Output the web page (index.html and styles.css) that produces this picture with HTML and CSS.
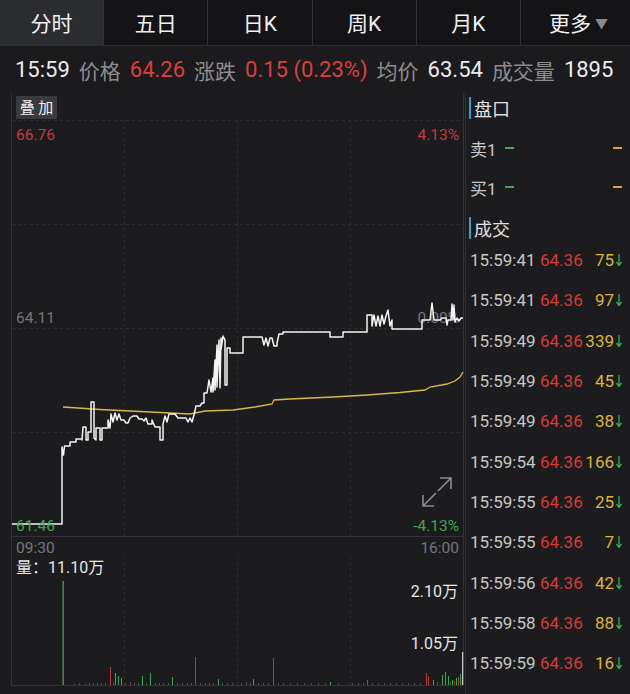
FILE: index.html
```html
<!DOCTYPE html>
<html lang="zh-CN">
<head>
<meta charset="utf-8">
<title>分时</title>
<link rel="stylesheet" href="styles.css">
</head>
<body>
<div class="app">
  <nav class="tabs">
    <div class="tab active">分时</div>
    <div class="tab">五日</div>
    <div class="tab">日K</div>
    <div class="tab">周K</div>
    <div class="tab">月K</div>
    <div class="tab more">更多<span class="caret">▼</span></div>
  </nav>
  <div class="info">
    <span class="w n">15:59</span>
    <span class="g">价格</span>
    <span class="r n">64.26</span>
    <span class="g">涨跌</span>
    <span class="r n">0.15 (0.23%)</span>
    <span class="g">均价</span>
    <span class="w n">63.54</span>
    <span class="g">成交量</span>
    <span class="w n">1895</span>
  </div>
  <div class="main">
    <div class="chart">
      <svg class="chart-svg" width="465" height="601" viewBox="0 93 465 601">
        <!-- frame -->
        <line x1="11.5" y1="93" x2="11.5" y2="686" class="frame"/>
        <line x1="463.5" y1="93" x2="463.5" y2="686" class="frame"/>
        <line x1="11" y1="536.5" x2="464" y2="536.5" class="frame"/>
        <line x1="11" y1="685.5" x2="464" y2="685.5" class="frame"/>
        <!-- grid -->
        <g class="grid">
          <line x1="12" y1="120.5" x2="463" y2="120.5"/>
          <line x1="12" y1="224.5" x2="463" y2="224.5"/>
          <line x1="12" y1="328.5" x2="463" y2="328.5"/>
          <line x1="12" y1="432.5" x2="463" y2="432.5"/>
          <line x1="124.5" y1="120" x2="124.5" y2="536"/>
          <line x1="237.5" y1="120" x2="237.5" y2="536"/>
          <line x1="350.5" y1="120" x2="350.5" y2="536"/>
          <line x1="124.5" y1="556" x2="124.5" y2="685"/>
          <line x1="237.5" y1="556" x2="237.5" y2="685"/>
          <line x1="350.5" y1="556" x2="350.5" y2="685"/>
        </g>
        <!-- overlay button -->
        <rect x="16" y="96" width="41" height="23" class="btn"/>
        <text x="36.5" y="113" class="btn-t" text-anchor="middle">叠 加</text>
        <!-- axis labels -->
        <text x="16" y="140" class="lbl red">66.76</text>
        <text x="459" y="140" class="lbl red" text-anchor="end">4.13%</text>
        <text x="16" y="323" class="lbl gray">64.11</text>
        <text x="459" y="323" class="lbl gray" text-anchor="end">0.00%</text>
        <!-- avg line -->
        <path class="avg" d="M63,407 L100,409.5 L150,412 L190,414 L205,411 L233,410 L255,407 L272,404 L274,400 L290,399 L333,397 L367,395 L400,392.5 L425,390 L430,387 L447,384 L455,381 L460,377 L463,372"/>
        <!-- price line -->
        <path class="price" d="M12,524 H62 V447 L63.5,455 L64.5,446 H70 V442 H76 V439 H82 V440 L83,427 H86 V440 H88 V432 H91 V402 H94 V438 L96,440 V428 H100 V440 H102 V428 H108 V420 L110,428 L111,414 L113,422 L115,413 L117,420 L119,414 L121,420 H124 L126,423 H128 L130,418 L133,416 H137 L139,419 H142 L144,421 L146,418 L148,424 H152 V420 L155,427 H160 V440 H163 V424 L165,416 L167,422 L169,414 H175 L178,418 H186 L188,422 L190,418 L192,422 L194,415 L196,406 H200 L202,403 H204 V393 H207 L209,380 L211,392 L213,378 V392 L215,360 V390 L217,345 V387 L219,340 L220,388 L221,338 V350 L223,336 L225,340 V385 H227 V348 H230 V353 H243 V337 H262 L264,345 L266,338 L268,346 L270,338 H272 L274,346 H277 V343 L279,334 H283 V332 H330 V337 H343 V332 H367 V315 H372 V326 L374,315 L376,326 L378,316 L380,326 L382,315 L384,324 L386,316 L388,310 L390,326 L392,320 V329 H422 V320 H430 L432,303 L434,320 H440 L442,318 H446 L447,325 L448,320 H451 L452,304 L453,320 L454,305 L455,322 L457,318 L459,321 L461,318 H463"/>
        <text x="16" y="531" class="lbl green">61.46</text>
        <text x="459" y="531" class="lbl green" text-anchor="end">-4.13%</text>
        <!-- expand icon -->
        <g class="expand">
          <path d="M436,493 L423,506 M423,495 V506 H434"/>
          <path d="M438,491 L451,478 M440,478 H451 V489"/>
        </g>
        <!-- time axis -->
        <text x="16" y="553" class="lbl gray">09:30</text>
        <text x="459" y="553" class="lbl gray" text-anchor="end">16:00</text>
        <!-- volume labels -->
        <text x="16" y="573" class="vol-t">量：11.10万</text>
        <text x="458" y="597" class="vol-t" text-anchor="end">2.10万</text>
        <text x="458" y="649" class="vol-t" text-anchor="end">1.05万</text>
        <!-- volume bars -->
        <g class="vg">
          <rect x="62.5" y="581" width="1.3" height="104"/>
          <rect x="115" y="673" width="1" height="12"/>
          <rect x="118" y="676" width="1" height="9"/>
          <rect x="121" y="678" width="1" height="7"/>
          <rect x="142" y="676" width="1" height="9"/>
          <rect x="150" y="673" width="1" height="12"/>
          <rect x="172" y="677" width="1" height="8"/>
          <rect x="218" y="679" width="1" height="6"/>
          <rect x="253" y="679" width="1" height="6"/>
          <rect x="330" y="682" width="1" height="3"/>
          <rect x="433" y="680" width="1" height="5"/>
          <rect x="442" y="675" width="1" height="10"/>
          <rect x="445" y="672" width="1" height="13"/>
          <rect x="448" y="676" width="1" height="9"/>
          <rect x="452" y="680" width="1" height="5"/>
          <rect x="456" y="678" width="1" height="7"/>
          <rect x="460" y="674" width="1" height="11"/>
        </g>
        <g class="vr">
          <rect x="110" y="667" width="1" height="18"/>
          <rect x="195" y="657" width="1" height="28"/>
          <rect x="273" y="658" width="1" height="27"/>
          <rect x="367" y="680" width="1" height="5"/>
          <rect x="426" y="673" width="1" height="12"/>
          <rect x="428" y="676" width="1" height="9"/>
          <rect x="458" y="677" width="1" height="8"/>
        </g>
        <rect x="462" y="652" width="1.2" height="33" class="vw"/>
        <g class="vs">
          <rect x="74" y="684" width="1" height="1"/>
          <rect x="79" y="683" width="1" height="2"/>
          <rect x="85" y="684" width="1" height="1"/>
          <rect x="89" y="683" width="1" height="2"/>
          <rect x="93" y="683" width="1" height="2"/>
          <rect x="97" y="683" width="1" height="2"/>
          <rect x="101" y="683" width="1" height="2"/>
          <rect x="105" y="683" width="1" height="2"/>
          <rect x="113" y="682" width="1" height="3"/>
          <rect x="125" y="683" width="1" height="2"/>
          <rect x="130" y="682" width="1" height="3"/>
          <rect x="134" y="683" width="1" height="2"/>
          <rect x="138" y="683" width="1" height="2"/>
          <rect x="146" y="683" width="1" height="2"/>
          <rect x="155" y="683" width="1" height="2"/>
          <rect x="159" y="683" width="1" height="2"/>
          <rect x="163" y="683" width="1" height="2"/>
          <rect x="168" y="683" width="1" height="2"/>
          <rect x="177" y="683" width="1" height="2"/>
          <rect x="182" y="683" width="1" height="2"/>
          <rect x="187" y="683" width="1" height="2"/>
          <rect x="191" y="683" width="1" height="2"/>
          <rect x="200" y="683" width="1" height="2"/>
          <rect x="205" y="683" width="1" height="2"/>
          <rect x="209" y="683" width="1" height="2"/>
          <rect x="213" y="683" width="1" height="2"/>
          <rect x="222" y="683" width="1" height="2"/>
          <rect x="227" y="683" width="1" height="2"/>
          <rect x="232" y="683" width="1" height="2"/>
          <rect x="241" y="683" width="1" height="2"/>
          <rect x="246" y="682" width="1" height="3"/>
          <rect x="250" y="683" width="1" height="2"/>
          <rect x="258" y="683" width="1" height="2"/>
          <rect x="263" y="683" width="1" height="2"/>
          <rect x="268" y="683" width="1" height="2"/>
          <rect x="278" y="683" width="1" height="2"/>
          <rect x="283" y="683" width="1" height="2"/>
          <rect x="290" y="683" width="1" height="2"/>
          <rect x="297" y="683" width="1" height="2"/>
          <rect x="304" y="683" width="1" height="2"/>
          <rect x="311" y="683" width="1" height="2"/>
          <rect x="318" y="683" width="1" height="2"/>
          <rect x="325" y="683" width="1" height="2"/>
          <rect x="338" y="683" width="1" height="2"/>
          <rect x="352" y="683" width="1" height="2"/>
          <rect x="358" y="683" width="1" height="2"/>
          <rect x="363" y="683" width="1" height="2"/>
          <rect x="372" y="683" width="1" height="2"/>
          <rect x="378" y="683" width="1" height="2"/>
          <rect x="384" y="683" width="1" height="2"/>
          <rect x="390" y="683" width="1" height="2"/>
          <rect x="396" y="683" width="1" height="2"/>
          <rect x="402" y="683" width="1" height="2"/>
          <rect x="408" y="683" width="1" height="2"/>
          <rect x="414" y="683" width="1" height="2"/>
          <rect x="420" y="683" width="1" height="2"/>
          <rect x="437" y="682" width="1" height="3"/>
          <rect x="450" y="682" width="1" height="3"/>
          <rect x="454" y="681" width="1" height="4"/>
        </g>
      </svg>
    </div>
    <aside class="side">
      <div class="head head-top"><span class="bar"></span>盘口</div>
      <div class="quote q1"><span class="ql">卖1</span><span class="dash-g"></span><span class="dash-o"></span></div>
      <div class="quote q2"><span class="ql">买1</span><span class="dash-g"></span><span class="dash-o"></span></div>
      <div class="head head-deal"><span class="bar"></span>成交</div>
      <div class="trades">
        <div class="trade"><span class="t">15:59:41</span><span class="p">64.36</span><span class="v">75</span><svg class="arr" width="6" height="12" viewBox="0 0 6 12"><path d="M3,0 V11 M0.5,8 L3,11.5 L5.5,8"/></svg></div>
        <div class="trade"><span class="t">15:59:41</span><span class="p">64.36</span><span class="v">97</span><svg class="arr" width="6" height="12" viewBox="0 0 6 12"><path d="M3,0 V11 M0.5,8 L3,11.5 L5.5,8"/></svg></div>
        <div class="trade"><span class="t">15:59:49</span><span class="p">64.36</span><span class="v">339</span><svg class="arr" width="6" height="12" viewBox="0 0 6 12"><path d="M3,0 V11 M0.5,8 L3,11.5 L5.5,8"/></svg></div>
        <div class="trade"><span class="t">15:59:49</span><span class="p">64.36</span><span class="v">45</span><svg class="arr" width="6" height="12" viewBox="0 0 6 12"><path d="M3,0 V11 M0.5,8 L3,11.5 L5.5,8"/></svg></div>
        <div class="trade"><span class="t">15:59:49</span><span class="p">64.36</span><span class="v">38</span><svg class="arr" width="6" height="12" viewBox="0 0 6 12"><path d="M3,0 V11 M0.5,8 L3,11.5 L5.5,8"/></svg></div>
        <div class="trade"><span class="t">15:59:54</span><span class="p">64.36</span><span class="v">166</span><svg class="arr" width="6" height="12" viewBox="0 0 6 12"><path d="M3,0 V11 M0.5,8 L3,11.5 L5.5,8"/></svg></div>
        <div class="trade"><span class="t">15:59:55</span><span class="p">64.36</span><span class="v">25</span><svg class="arr" width="6" height="12" viewBox="0 0 6 12"><path d="M3,0 V11 M0.5,8 L3,11.5 L5.5,8"/></svg></div>
        <div class="trade"><span class="t">15:59:55</span><span class="p">64.36</span><span class="v">7</span><svg class="arr" width="6" height="12" viewBox="0 0 6 12"><path d="M3,0 V11 M0.5,8 L3,11.5 L5.5,8"/></svg></div>
        <div class="trade"><span class="t">15:59:56</span><span class="p">64.36</span><span class="v">42</span><svg class="arr" width="6" height="12" viewBox="0 0 6 12"><path d="M3,0 V11 M0.5,8 L3,11.5 L5.5,8"/></svg></div>
        <div class="trade"><span class="t">15:59:58</span><span class="p">64.36</span><span class="v">88</span><svg class="arr" width="6" height="12" viewBox="0 0 6 12"><path d="M3,0 V11 M0.5,8 L3,11.5 L5.5,8"/></svg></div>
        <div class="trade"><span class="t">15:59:59</span><span class="p">64.36</span><span class="v">16</span><svg class="arr" width="6" height="12" viewBox="0 0 6 12"><path d="M3,0 V11 M0.5,8 L3,11.5 L5.5,8"/></svg></div>
      </div>
    </aside>
  </div>
</div>
</body>
</html>
```

FILE: styles.css
```css
* { box-sizing: border-box; }
html, body {
  margin: 0;
  padding: 0;
  background: #1c1c1f;
}
body {
  width: 630px;
  height: 694px;
  overflow: hidden;
  font-family: Roboto, "Noto Sans CJK SC", sans-serif;
  color: #e8e8e8;
}
.app {
  display: flex;
  flex-direction: column;
  width: 630px;
  height: 694px;
}

/* tabs */
.tabs {
  display: flex;
  height: 46px;
  background: #141416;
  border-bottom: 1px solid #2e2e31;
}
.tab {
  flex: 1;
  display: flex;
  align-items: center;
  justify-content: center;
  font-size: 21px;
  color: #f0f0f0;
  border-right: 1px solid #323235;
  padding-bottom: 2px;
}
.tab:last-child { border-right: none; }
.tab.active { background: #2b2c30; }
.tab.more { padding-left: 6px; }
.caret {
  font-size: 13px;
  color: #8a8a8c;
  margin-left: 4px;
  padding-top: 2px;
}

/* info line */
.info {
  display: flex;
  align-items: center;
  gap: 9px;
  height: 47px;
  padding-left: 15px;
  font-size: 21px;
  background: #1b1b1e;
  white-space: nowrap;
}
.info .n { font-size: 22px; }
.info .w { color: #ececec; }
.info .g { color: #8c8c8e; }
.info .r { color: #dc3f3d; }

/* main */
.main {
  flex: 1;
  display: flex;
  min-height: 0;
}
.chart {
  width: 465px;
  flex: none;
}
.chart-svg { display: block; }
.frame { stroke: #333336; stroke-width: 1; }
.grid line { stroke: #2c2c30; stroke-width: 1; stroke-dasharray: 3 3; }
.btn { fill: #3b3b3f; }
.btn-t { font-size: 15px; fill: #f2f2f2; font-family: "Noto Sans CJK SC", sans-serif; }
.lbl { font-size: 15.5px; font-family: Roboto, sans-serif; }
.lbl.red { fill: #c8393a; }
.lbl.gray { fill: #76767a; }
.lbl.green { fill: #3ea64e; }
.avg { fill: none; stroke: #d6b84a; stroke-width: 1.3; }
.price { fill: none; stroke: #f4f4f4; stroke-width: 1.5; stroke-linejoin: round; }
.expand path { fill: none; stroke: #8c8c90; stroke-width: 1.6; }
.vol-t { font-size: 16px; fill: #e6e6e6; font-family: Roboto, "Noto Sans CJK SC", sans-serif; }
.vg rect { fill: #3ca84c; }
.vr rect { fill: #b03a36; }
.vw { fill: #c8c8c8; }
.vs rect { fill: #4e4e50; }

/* side panel */
.side {
  flex: 1;
  border-left: 1px solid #303033;
  display: flex;
  flex-direction: column;
  padding-left: 3px;
}
.head {
  display: flex;
  align-items: center;
  height: 24px;
  font-size: 18px;
  color: #e0e0e0;
}
.head-top { margin-top: 3px; }
.head-deal { margin-top: 10px; }
.bar {
  width: 2px;
  height: 22px;
  background: #3a9ec8;
  margin-right: 3px;
}
.quote {
  display: flex;
  align-items: center;
  height: 40px;
  font-size: 17px;
  padding-left: 1px;
  padding-right: 8px;
}
.q1 { margin-top: 8px; }
.q2 { height: 38px; }
.ql { color: #c8c8c8; }
.dash-g {
  width: 9px;
  height: 2px;
  background: #3eaa4c;
  margin-left: 8px;
}
.dash-o {
  width: 9px;
  height: 2px;
  background: #d9a23a;
  margin-left: auto;
}
.trades {
  display: flex;
  flex-direction: column;
}
.trade {
  display: grid;
  grid-template-columns: 70px 44px 30px 10px;
  align-items: center;
  height: 40.3px;
  font-size: 17px;
  padding-left: 1px;
}
.t { color: #c6c6c6; }
.p { color: #d93a35; }
.v { color: #ddb23c; text-align: right; }
.arr { justify-self: center; }
.arr path { fill: none; stroke: #2fb050; stroke-width: 1.3; }
```
